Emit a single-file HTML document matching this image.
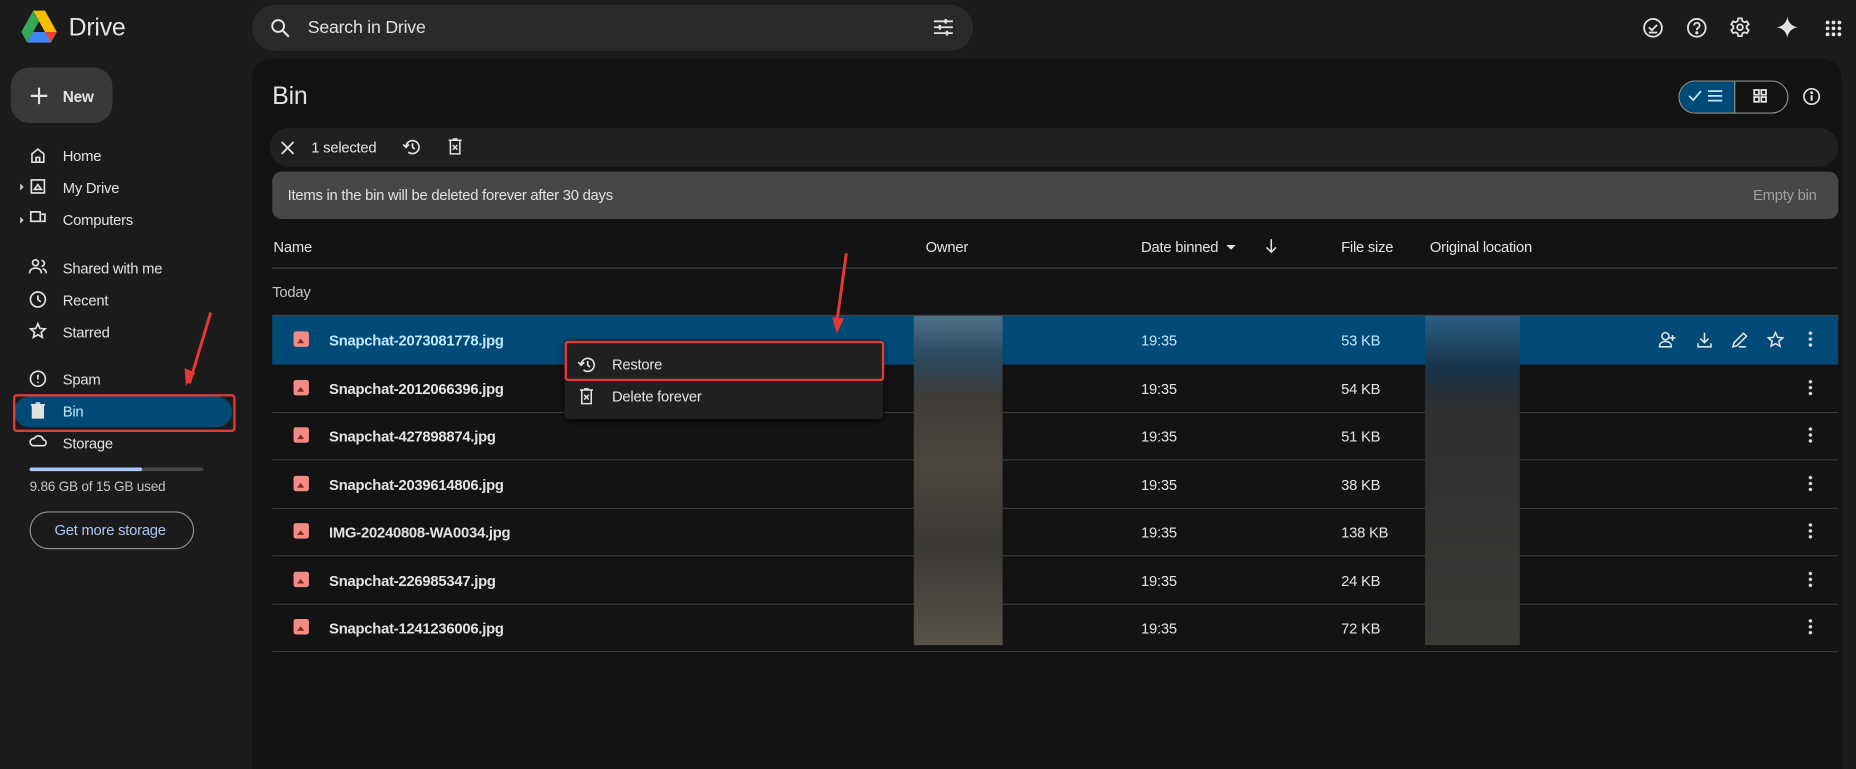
<!DOCTYPE html>
<html><head><meta charset="utf-8"><style>
html,body{margin:0;padding:0;background:#1b1b1b;overflow:hidden;width:1856px;height:751px}
#w{position:absolute;left:0;top:0;width:1568px;height:635px;transform:scale(1.18367);transform-origin:0 0;font-family:"Liberation Sans",Arial,sans-serif;color:#e3e3e3;font-size:13px;letter-spacing:-0.2px}
.a{position:absolute}
.t{position:absolute;white-space:nowrap;line-height:1}
svg{position:absolute;overflow:visible}
.nav{position:absolute;left:53px;font-size:12.5px;color:#e3e3e3}
.row{position:absolute;left:230px;width:1323px;height:40px;border-bottom:1px solid #3c3c3c}
.fn{position:absolute;left:48px;top:14px;font-weight:bold;font-size:12.5px}
.tm{position:absolute;left:734px;top:14px;font-size:12.5px}
.sz{position:absolute;left:903px;top:14px;font-size:12.5px}
.ic{position:absolute;left:18px;top:13px;width:13px;height:13px;background:#f28b82;border-radius:2px}
.ic:after{content:"";position:absolute;left:3px;top:6px;border-left:3.5px solid transparent;border-right:3.5px solid transparent;border-bottom:4px solid #7a2a24}
.dots{position:absolute;left:1298px;top:12px;width:3px;height:15px;background:radial-gradient(circle,#e3e3e3 1.3px,transparent 1.6px) 0 0/3px 5px repeat-y}
</style></head><body><div id="w">
<div class="a" style="left:213px;top:50px;width:1343px;height:600px;background:#131313;border-radius:16px 16px 0 0"></div>
<svg style="left:18px;top:9px" width="30" height="28" viewBox="0 0 30 28">
<path d="M10 0h10l10 18h-10z" fill="#fbbc04"/><path d="M10 0L0 18l5 9 10-18z" fill="#34a853"/><path d="M5 27h20l5-9H10z" fill="#4285f4"/><path d="M25 27l5-9h-10z" fill="#ea4335"/></svg>
<div class="t" style="left:58px;top:13px;font-size:21px;color:#e3e3e3">Drive</div>
<div class="a" style="left:213px;top:4px;width:609px;height:39px;background:#282a2c;border-radius:20px"></div>
<svg style="left:229px;top:16px" width="16" height="16"><circle cx="6" cy="6" r="5" stroke="#e3e3e3" stroke-width="1.6" fill="none"/><path d="M10 10l5 5" stroke="#e3e3e3" stroke-width="1.8"/></svg>
<div class="t" style="left:260px;top:16px;font-size:15px">Search in Drive</div>
<svg style="left:789px;top:16px" width="16" height="14" stroke="#e3e3e3" stroke-width="1.5"><path d="M0 2h16M0 7h16M0 12h16"/><path d="M10 0v4M5 5v4M11 10v4" stroke-width="2"/></svg>
<svg style="left:1388px;top:15px" width="17" height="17" fill="none" stroke="#e3e3e3" stroke-width="1.5"><circle cx="8.5" cy="8.5" r="7.5"/><path d="M5 8l2.5 2.5L12 6M5 12.5h7"/></svg>
<svg style="left:1425px;top:15px" width="17" height="17" fill="none" stroke="#e3e3e3" stroke-width="1.5"><circle cx="8.5" cy="8.5" r="7.5"/><path d="M6.3 6.5a2.3 2.3 0 1 1 3 2.2c-.8.4-.8 1-.8 1.8"/><circle cx="8.5" cy="12.7" r=".6" fill="#e3e3e3"/></svg>
<svg style="left:1461px;top:14px" width="18" height="18" viewBox="0 0 24 24" fill="none" stroke="#e3e3e3" stroke-width="2"><circle cx="12" cy="12" r="3.2"/><path d="M10 2h4l.6 3 2.3 1.3 2.9-1 2 3.4-2.3 2v2.6l2.3 2-2 3.4-2.9-1-2.3 1.3-.6 3h-4l-.6-3-2.3-1.3-2.9 1-2-3.4 2.3-2v-2.6l-2.3-2 2-3.4 2.9 1L9.4 5z"/></svg>
<svg style="left:1501px;top:14px" width="18" height="18" viewBox="0 0 18 18"><path d="M9 0C9.6 5 13 8.4 18 9 13 9.6 9.6 13 9 18 8.4 13 5 9.6 0 9 5 8.4 8.4 5 9 0z" fill="#e3e3e3"/></svg>
<svg style="left:1542px;top:17px" width="14" height="14" fill="#e3e3e3"><circle cx="2" cy="2" r="1.6"/><circle cx="7" cy="2" r="1.6"/><circle cx="12" cy="2" r="1.6"/><circle cx="2" cy="7" r="1.6"/><circle cx="7" cy="7" r="1.6"/><circle cx="12" cy="7" r="1.6"/><circle cx="2" cy="12" r="1.6"/><circle cx="7" cy="12" r="1.6"/><circle cx="12" cy="12" r="1.6"/></svg>
<div class="a" style="left:9px;top:57px;width:86px;height:47px;background:#37393b;border-radius:16px"></div>
<svg style="left:26px;top:74px" width="14" height="14" stroke="#e3e3e3" stroke-width="1.8"><path d="M7 0v14M0 7h14"/></svg>
<div class="t" style="left:53px;top:75px;font-size:13px;font-weight:bold">New</div>
<div class="a" style="left:12px;top:335px;width:184px;height:26px;background:#004a77;border-radius:13px"></div>
<svg style="left:25px;top:124px" width="14" height="200" fill="none" stroke="#e3e3e3" stroke-width="1.4">
<path d="M2 6L7 2l5 4v7H2z M5.5 13v-4h3v4"/>
<rect x="1.5" y="28" width="11" height="11"/><path d="M4 36h6l-3-4z"/>
<path d="M1 55h8v8H1z M10 57h3v6h-3"/>
<circle cx="5" cy="98" r="2.5"/><path d="M0 107c0-3 2-4.5 5-4.5s5 1.5 5 4.5 M10 96a2.5 2.5 0 0 1 0 5 M11 103c2 .5 3 2 3 4"/>
<circle cx="7" cy="129" r="6.3"/><path d="M7 125.5V129l2.5 2"/>
<path d="M7 149.5l1.8 4 4.3.4-3.3 2.9 1 4.2L7 158.8 3.2 161l1-4.2-3.3-2.9 4.3-.4z"/>
<circle cx="7" cy="196" r="6.3"/><path d="M7 192.5v4M7 198.5v1"/>
</svg>
<svg style="left:25px;top:340px" width="14" height="42" fill="#e3e3e3" stroke="#e3e3e3" stroke-width="1.4"><path d="M1 2h12M5 .5h4M2.5 2.5h9V13h-9z" /><path d="M3 36.5a3 3 0 0 1 1-6 4 4 0 0 1 7.5 1 2.5 2.5 0 0 1 0 5z" fill="none"/></svg>
<svg style="left:17px;top:155px" width="4" height="34" fill="#c4c7c5"><path d="M0 0l3 3-3 3zM0 28l3 3-3 3z"/></svg>
<div class="nav" style="top:125px">Home</div>
<div class="nav" style="top:152px">My Drive</div>
<div class="nav" style="top:179px">Computers</div>
<div class="nav" style="top:220px">Shared with me</div>
<div class="nav" style="top:247px">Recent</div>
<div class="nav" style="top:274px">Starred</div>
<div class="nav" style="top:314px">Spam</div>
<div class="nav" style="top:341px;color:#c2e7ff">Bin</div>
<div class="nav" style="top:368px">Storage</div>
<div class="a" style="left:25px;top:395px;width:147px;height:3px;background:#444746;border-radius:2px"></div>
<div class="a" style="left:25px;top:395px;width:95px;height:3px;background:#a8c7fa;border-radius:2px"></div>
<div class="t" style="left:25px;top:407px;font-size:11.5px;color:#c4c7c5">9.86 GB of 15 GB used</div>
<div class="a" style="left:25px;top:432px;width:137px;height:30px;border:1px solid #8e918f;border-radius:16px"></div>
<div class="t" style="left:46px;top:442px;font-size:12.5px;color:#a8c7fa">Get more storage</div>
<div class="a" style="left:11px;top:333px;width:184px;height:28px;border:2px solid #e53935;border-radius:3px"></div>
<svg style="left:150px;top:262px" width="32" height="70"><path d="M28 2L10 62" stroke="#e53935" stroke-width="2.5"/><path d="M7 64l-1-15 9 4z" fill="#e53935"/></svg>
<div class="t" style="left:230px;top:71px;font-size:21px">Bin</div>
<div class="a" style="left:1418px;top:68px;width:91px;height:26px;border:1px solid #8e918f;border-radius:14px;overflow:hidden"><div class="a" style="left:0;top:0;width:46px;height:26px;background:#004a77;border-right:1px solid #8e918f"></div></div>
<svg style="left:1426px;top:75px" width="32" height="12" fill="none" stroke="#c2e7ff" stroke-width="1.5"><path d="M1 6l3.5 3.5L11 2M17 2h12M17 6h12M17 10h12"/></svg>
<svg style="left:1481px;top:75px" width="12" height="12" fill="none" stroke="#e3e3e3" stroke-width="1.5"><rect x="1" y="1" width="4" height="4"/><rect x="7" y="1" width="4" height="4"/><rect x="1" y="7" width="4" height="4"/><rect x="7" y="7" width="4" height="4"/></svg>
<svg style="left:1523px;top:74px" width="15" height="15" fill="none" stroke="#e3e3e3" stroke-width="1.4"><circle cx="7.5" cy="7.5" r="6.5"/><path d="M7.5 6.5v4.5" stroke-width="1.8"/><circle cx="7.5" cy="4.3" r=".5" fill="#e3e3e3"/></svg>
<div class="a" style="left:228px;top:108px;width:1325px;height:33px;background:#1f2022;border-radius:17px"></div>
<svg style="left:238px;top:120px" width="10" height="10" stroke="#e3e3e3" stroke-width="1.5"><path d="M0 0l10 10M10 0L0 10"/></svg>
<div class="t" style="left:263px;top:119px;font-size:12.5px">1 selected</div>
<svg style="left:340px;top:117px" width="15" height="14" fill="none" stroke="#e3e3e3" stroke-width="1.4"><path d="M3 7a5.5 5.5 0 1 1 2 4.5"/><path d="M0.5 5l2.5 2.5L5.5 5"/><path d="M8.5 4v3.5l2 1.5"/></svg>
<svg style="left:379px;top:117px" width="11" height="14" fill="none" stroke="#e3e3e3" stroke-width="1.3"><path d="M0 1.5h11M3.5 .5h4M1.5 2v11h8V2M3.5 5.5l4 4M7.5 5.5l-4 4"/></svg>
<div class="a" style="left:230px;top:145px;width:1323px;height:40px;background:#474747;border-radius:8px"></div>
<div class="t" style="left:243px;top:159px;font-size:12.5px">Items in the bin will be deleted forever after 30 days</div>
<div class="t" style="left:1481px;top:159px;font-size:12.5px;color:#a0a0a0">Empty bin</div>
<div class="t" style="left:231px;top:203px;font-size:12.5px">Name</div>
<div class="t" style="left:782px;top:203px;font-size:12.5px">Owner</div>
<div class="t" style="left:964px;top:203px;font-size:12.5px">Date binned</div>
<svg style="left:1036px;top:207px" width="8" height="5"><path d="M0 0h8L4 4z" fill="#e3e3e3"/></svg>
<svg style="left:1069px;top:202px" width="10" height="12" fill="none" stroke="#e3e3e3" stroke-width="1.3"><path d="M5 0v11M1 7l4 4 4-4"/></svg>
<div class="t" style="left:1133px;top:203px;font-size:12.5px">File size</div>
<div class="t" style="left:1208px;top:203px;font-size:12.5px">Original location</div>
<div class="a" style="left:230px;top:226px;width:1323px;height:1px;background:#444"></div>
<div class="t" style="left:230px;top:241px;font-size:12.5px;color:#c4c7c5">Today</div>
<div class="a" style="left:230px;top:266px;width:1323px;height:1px;background:#444"></div>
<div class="row" style="top:267px;background:#004a77;border-bottom-color:#004a77"><div class="ic"></div><div class="fn" style="color:#c2e7ff">Snapchat-2073081778.jpg</div><div class="tm" style="color:#c2e7ff">19:35</div><div class="sz" style="color:#c2e7ff">53 KB</div><div class="dots"></div></div>
<div class="row" style="top:307.5px"><div class="ic"></div><div class="fn">Snapchat-2012066396.jpg</div><div class="tm">19:35</div><div class="sz">54 KB</div><div class="dots"></div></div>
<div class="row" style="top:348px"><div class="ic"></div><div class="fn">Snapchat-427898874.jpg</div><div class="tm">19:35</div><div class="sz">51 KB</div><div class="dots"></div></div>
<div class="row" style="top:388.5px"><div class="ic"></div><div class="fn">Snapchat-2039614806.jpg</div><div class="tm">19:35</div><div class="sz">38 KB</div><div class="dots"></div></div>
<div class="row" style="top:429px"><div class="ic"></div><div class="fn">IMG-20240808-WA0034.jpg</div><div class="tm">19:35</div><div class="sz">138 KB</div><div class="dots"></div></div>
<div class="row" style="top:469.5px"><div class="ic"></div><div class="fn">Snapchat-226985347.jpg</div><div class="tm">19:35</div><div class="sz">24 KB</div><div class="dots"></div></div>
<div class="row" style="top:510px"><div class="ic"></div><div class="fn">Snapchat-1241236006.jpg</div><div class="tm">19:35</div><div class="sz">72 KB</div><div class="dots"></div></div>
<div class="a" style="left:772px;top:267px;width:75px;height:278px;background:linear-gradient(180deg,#4d7389 0%,#2b4a60 12%,#3f3b37 25%,#4a463f 45%,#3c3a36 70%,#57534b 100%)"></div>
<div class="a" style="left:1204px;top:267px;width:80px;height:278px;background:linear-gradient(180deg,#2b5d82 0%,#17344a 16%,#2f2f2f 28%,#353432 60%,#3a3936 100%)"></div>
<svg style="left:1402px;top:280px" width="140" height="14" fill="none" stroke="#e3e3e3" stroke-width="1.3">
<circle cx="5" cy="4" r="3"/><path d="M0 13c0-3 2-4.5 5-4.5s5 1.5 5 4.5zM11 3v5M8.5 5.5h5"/>
<path d="M38 1v8M34.5 6l3.5 3.5L41.5 6M32.5 10v3h11v-3"/>
<path d="M62 13l1-3.5 8-8 2.5 2.5-8 8zM67 13h6" />
<path d="M98 1l1.8 4 4.3.4-3.3 2.9 1 4.2L98 10.3 94.2 12.5l1-4.2-3.3-2.9 4.3-.4z"/>
</svg>
<div class="a" style="left:477px;top:287px;width:269px;height:67px;background:#1f2022;border-radius:4px;box-shadow:0 2px 6px rgba(0,0,0,.6)"></div>
<svg style="left:488px;top:301px" width="15" height="14" fill="none" stroke="#e3e3e3" stroke-width="1.4"><path d="M3 7a5.5 5.5 0 1 1 2 4.5"/><path d="M0.5 5l2.5 2.5L5.5 5"/><path d="M8.5 4v3.5l2 1.5"/></svg>
<div class="t" style="left:517px;top:302px;font-size:12.5px">Restore</div>
<svg style="left:490px;top:328px" width="11" height="14" fill="none" stroke="#e3e3e3" stroke-width="1.3"><path d="M0 1.5h11M3.5 .5h4M1.5 2v11h8V2M3.5 5.5l4 4M7.5 5.5l-4 4"/></svg>
<div class="t" style="left:517px;top:329px;font-size:12.5px">Delete forever</div>
<div class="a" style="left:477px;top:288px;width:266px;height:30px;border:2px solid #e53935;border-radius:3px"></div>
<svg style="left:695px;top:212px" width="25" height="70"><path d="M20 2L12 60" stroke="#e53935" stroke-width="2.5"/><path d="M8 56l4 14 6-13z" fill="#e53935"/></svg>
</div></body></html>
